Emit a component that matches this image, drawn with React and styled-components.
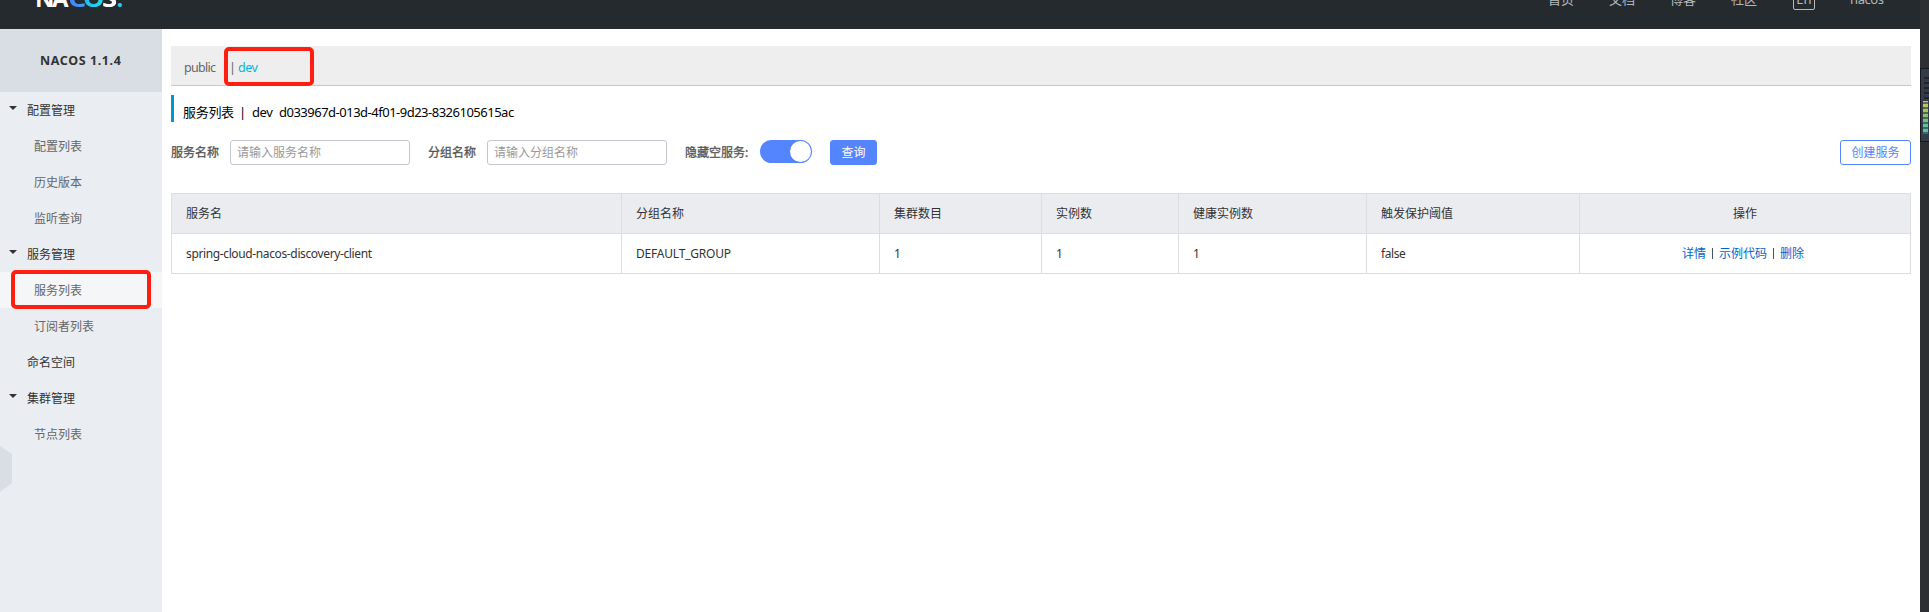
import React from 'react';
import styled, { createGlobalStyle } from 'styled-components';

const Global = createGlobalStyle`
  *{box-sizing:border-box}
  body{margin:0;background:#fff;overflow:hidden;color:#333;
    font:12px/18px "Noto Sans","Noto Sans CJK SC",sans-serif}
`;
const Screen = styled.div`display:flex;width:1929px;height:612px;overflow:hidden;`;
const Page = styled.div`flex:1;min-width:0;display:flex;flex-direction:column;`;
const Header = styled.header`
  height:29px;flex:none;background:#252a2f;display:flex;justify-content:space-between;
  align-items:flex-start;overflow:hidden;padding:0 36px 0 35px;
`;
const Logo = styled.div`
  display:flex;margin-top:-15px;height:26px;color:#fff;line-height:26px;
  font-family:"Open Sans",sans-serif;font-size:24px;font-weight:700;
`;
const Letter = styled.span`
  width:${p => p.$w}px;color:${p => p.$c || '#fff'};transform:scaleX(${p => p.$stretch || 1});transform-origin:left;
  ${p => p.$fade && `background:${p.$fade};background-clip:text;-webkit-background-clip:text;color:transparent;`}
`;
const Nav = styled.nav`display:flex;margin-top:-11px;color:#b6b9bb;font-size:13px;line-height:20px;`;
const NavItem = styled.span`width:${p => p.$w}px;letter-spacing:${p => p.$ls || 0}px;white-space:nowrap;`;
const Lang = styled.span`
  width:22px;height:21px;line-height:19px;text-align:center;border:1px solid #b6b9bb;border-radius:2px;margin-right:35px;
`;
const Body = styled.div`flex:1;display:flex;`;
const Side = styled.aside`width:162px;background:#eaedf1;position:relative;`;
const Version = styled.div`
  height:63px;line-height:63px;background:#d9dde4;padding-left:40px;font-weight:700;font-size:12.5px;
  letter-spacing:.6px;white-space:nowrap;
`;
const Group = styled.div`
  height:36px;display:flex;align-items:center;padding:1px 0 0 9px;gap:10px;color:#333;
  &::before{content:"";border:4px solid transparent;border-top-color:${p => (p.$leaf ? 'transparent' : '#333')};
    border-bottom:0;margin-top:-5px;}
`;
const Item = styled.div`
  height:36px;line-height:36px;padding:1px 0 0 34px;color:#666;background:${p => (p.$active ? '#f4f6f8' : 'none')};
`;
const Handle = styled.svg`position:absolute;left:0;top:417px;`;
const Mark = styled.div`
  position:absolute;left:${p => p.$x}px;top:${p => p.$y}px;width:${p => p.$w}px;height:${p => p.$h}px;
  border:4px solid #ff1f10;border-radius:5px;pointer-events:none;
`;
const Main = styled.main`flex:1;min-width:0;padding:17px 9px 0;`;
const Spaces = styled.div`
  height:40px;background:#eee;border-bottom:1px solid #c8c8c8;display:flex;align-items:center;padding:5px 0 0 13px;
  color:#666;font-size:12.5px;position:relative;
`;
const Space = styled.span`width:${p => p.$w}px;color:${p => p.$c || '#666'};letter-spacing:${p => p.$ls || 0}px;`;
const Title = styled.div`
  margin-top:9px;height:27px;border-left:3px solid #09c;padding:8px 0 0 9px;display:flex;color:#000;font-size:13px;line-height:19px;
  align-items:flex-start;white-space:pre;
`;
const Part = styled.span`width:${p => p.$w}px;letter-spacing:${p => p.$ls || 0}px;`;
const Form = styled.div`margin-top:18px;height:25px;display:flex;align-items:center;`;
const Label = styled.label`color:#555;width:${p => p.$w}px;white-space:nowrap;-webkit-text-stroke:.3px #555;`;
const Input = styled.input`
  width:180px;height:25px;border:1px solid #c4c6cf;border-radius:3px;padding:0 6px;margin-right:18px;font:inherit;
  &::placeholder{color:#999;opacity:1}
`;
const Switch = styled.span`
  width:52px;height:23px;border-radius:12px;background:#5584ff;padding:1px;display:flex;justify-content:flex-end;
  align-self:flex-start;margin-right:18px;
  &::after{content:"";width:21px;height:21px;border-radius:50%;background:#fff}
`;
const Button = styled.button`
  width:${p => p.$w}px;height:25px;border:1px solid #5584ff;border-radius:3px;padding:0;font:inherit;
  color:${p => (p.$solid ? '#fff' : '#5584ff')};background:${p => (p.$solid ? '#5584ff' : '#fff')};
  margin-left:${p => (p.$solid ? '0' : 'auto')};
`;
const Table = styled.div`
  margin-top:28px;display:grid;grid-template-columns:450px 258px 162px 137px 188px 213px 331px;
  border:1px solid #dcdee3;border-right:0;width:1740px;height:81px;grid-template-rows:40px 39px;
`;
const Cell = styled.div`
  padding:0 14px;display:flex;align-items:center;border-right:1px solid #dcdee3;
  ${p => p.$head && 'background:#ebecf0;border-bottom:1px solid #dcdee3;'}
  ${p => p.$center && 'justify-content:center;'}
  letter-spacing:${p => p.$ls || 0}px;
`;
const Actions = styled(Cell)`padding-right:18px;`;
const Link = styled.a`color:#06c;`;
const Sep = styled.span`width:1px;height:11px;background:#456;margin:0 6px;`;
const Edge = styled.div`width:9px;flex:none;background:#2e2f33;padding-top:68px;`;
const Gadget = styled.div`
  height:74px;border:1px solid #15171c;border-right:0;background:#333b49;padding:8px 0 0 2px;display:flex;flex-direction:column;
`;
const Bars = styled.div`
  width:${p => p.$w}px;height:${p => p.$h}px;align-self:${p => p.$end ? 'flex-end' : 'flex-start'};
  background:${p => p.$bg};
`;

const heads = ['服务名', '分组名称', '集群数目', '实例数', '健康实例数', '触发保护阈值'];
const menu = [
  ['g', '配置管理'], ['i', '配置列表'], ['i', '历史版本'], ['i', '监听查询'],
  ['g', '服务管理'], ['a', '服务列表'], ['i', '订阅者列表'],
  ['l', '命名空间'], ['g', '集群管理'], ['i', '节点列表'],
];

export default function App() {
  return (
    <Screen>
      <Global />
      <Page>
        <Header>
          <Logo>
            <Letter $w={17}>N</Letter><Letter $w={15.5}>A</Letter>
            <Letter $w={15} $stretch={1.2} $fade="linear-gradient(90deg,#4a7dff,#38a5f8)">C</Letter>
            <Letter $w={19} $stretch={1.12} $fade="linear-gradient(90deg,#22b4f5,#1fe0ec)">O</Letter>
            <Letter $w={15} $stretch={1.15}>S</Letter><Letter $w={8} $c="#1fd3ec">.</Letter>
          </Logo>
          <Nav>
            <NavItem $w={61}>首页</NavItem><NavItem $w={61}>文档</NavItem><NavItem $w={61}>博客</NavItem>
            <NavItem $w={62}>社区</NavItem><Lang>En</Lang><NavItem $w={34} $ls={-0.4}>nacos</NavItem>
          </Nav>
        </Header>
        <Body>
          <Side>
            <Version>NACOS 1.1.4</Version>
            {menu.map(([k, t]) => (k === 'g' || k === 'l'
              ? <Group key={t} $leaf={k === 'l'}>{t}</Group>
              : <Item key={t} $active={k === 'a'}>{t}</Item>))}
            <Handle width="12" height="46"><path d="M0 0L12 8V37L0 46Z" fill="#d9dde4" /></Handle>
            <Mark $x={11} $y={241} $w={140} $h={39} />
          </Side>
          <Main>
            <Spaces>
              <Space $w={45} $ls={-0.7}>public</Space><Space $w={9}>|</Space><Space $w={40} $c="#00b7dd" $ls={-0.5}>dev</Space>
              <Mark $x={53} $y={1} $w={90} $h={39} />
            </Spaces>
            <Title>
              <Part $w={56} $ls={-0.3}>服务列表</Part><Part $w={13}>|</Part><Part $w={27} $ls={-0.4}>dev</Part>
              <Part $ls={-0.5}>d033967d-013d-4f01-9d23-8326105615ac</Part>
            </Title>
            <Form>
              <Label $w={59}>服务名称</Label><Input placeholder="请输入服务名称" />
              <Label $w={59}>分组名称</Label><Input placeholder="请输入分组名称" />
              <Label $w={75}>隐藏空服务:</Label><Switch />
              <Button $w={47} $solid>查询</Button>
              <Button $w={71}>创建服务</Button>
            </Form>
            <Table>
              {heads.map(h => <Cell key={h} $head>{h}</Cell>)}
              <Cell $head $center>操作</Cell>
              <Cell $ls={-0.37}>spring-cloud-nacos-discovery-client</Cell><Cell $ls={-0.2}>DEFAULT_GROUP</Cell>
              <Cell>1</Cell><Cell>1</Cell><Cell>1</Cell><Cell $ls={-0.4}>false</Cell>
              <Actions $center><Link>详情</Link><Sep /><Link>示例代码</Link><Sep /><Link>删除</Link></Actions>
            </Table>
          </Main>
        </Body>
      </Page>
      <Edge>
        <Gadget>
          <Bars $w={5} $h={24} $end $bg="repeating-linear-gradient(#20242c 0 2px,#333b49 2px 5px)" />
          <Bars $w={5} $h={33} $bg="repeating-linear-gradient(transparent 0 1px,#334155b0 1px 3px,transparent 3px 5px),linear-gradient(#d2c84a,#80c070 50%,#3cc8b4)" />
        </Gadget>
      </Edge>
    </Screen>
  );
}
